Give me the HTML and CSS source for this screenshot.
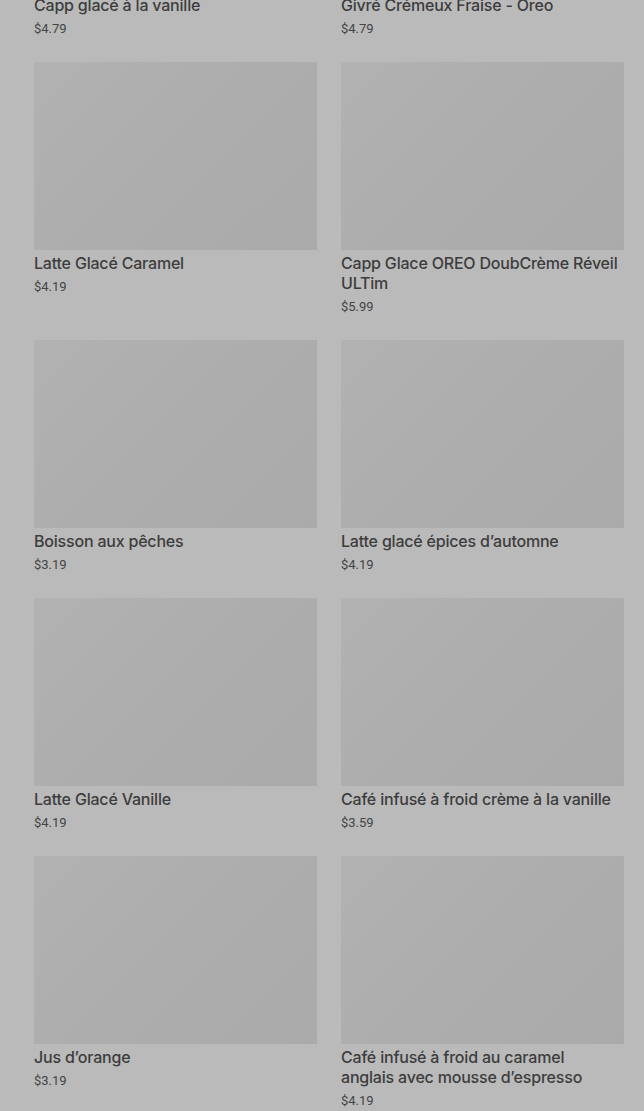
FILE: index.html
```html
<!DOCTYPE html>
<html lang="fr">
<head>
<meta charset="utf-8">
<title>Menu</title>
<link rel="stylesheet" href="styles.css">
</head>
<body>
<main class="grid">
  <div class="card"><div class="thumb"></div><h3 class="name">Capp glacé à la vanille</h3><p class="price">$4.79</p></div>
  <div class="card"><div class="thumb"></div><h3 class="name">Givré Crémeux Fraise - Oreo</h3><p class="price">$4.79</p></div>
  <div class="card"><div class="thumb"></div><h3 class="name">Latte Glacé Caramel</h3><p class="price">$4.19</p></div>
  <div class="card"><div class="thumb"></div><h3 class="name">Capp Glace OREO DoubCrème Réveil ULTim</h3><p class="price">$5.99</p></div>
  <div class="card"><div class="thumb"></div><h3 class="name">Boisson aux pêches</h3><p class="price">$3.19</p></div>
  <div class="card"><div class="thumb"></div><h3 class="name">Latte glacé épices d’automne</h3><p class="price">$4.19</p></div>
  <div class="card"><div class="thumb"></div><h3 class="name">Latte Glacé Vanille</h3><p class="price">$4.19</p></div>
  <div class="card"><div class="thumb"></div><h3 class="name">Café infusé à froid crème à la vanille</h3><p class="price">$3.59</p></div>
  <div class="card"><div class="thumb"></div><h3 class="name">Jus d’orange</h3><p class="price">$3.19</p></div>
  <div class="card"><div class="thumb"></div><h3 class="name">Café infusé à froid au caramel anglais avec mousse d’espresso</h3><p class="price">$4.19</p></div>
</main>
</body>
</html>
```

FILE: styles.css
```css
html, body {
  margin: 0;
  padding: 0;
  background: #bababa;
}
body {
  font-family: Inter, Roboto, "Liberation Sans", Arial, sans-serif;
  color: #3c3c3c;
  overflow: hidden;
}
.grid {
  display: grid;
  grid-template-columns: 283px 283px;
  column-gap: 24px;
  row-gap: 25px;
  padding: 0 20px 0 34px;
  margin-top: -196px;
  align-items: start;
}
.card {
  display: flex;
  flex-direction: column;
}
.thumb {
  height: 188px;
  background: linear-gradient(135deg, #b2b2b2 0%, #adadad 50%, #aaaaaa 100%);
}
.name {
  margin: 3px 0 0;
  padding-right: 4px;
  font-size: 16px;
  line-height: 20px;
  font-weight: 500;
  letter-spacing: -0.2px;
  color: #3d3d3d;
}
.price {
  margin: 6px 0 0;
  font-family: Roboto, "Liberation Sans", Arial, sans-serif;
  font-size: 13px;
  line-height: 16px;
  color: #444;
}
```
